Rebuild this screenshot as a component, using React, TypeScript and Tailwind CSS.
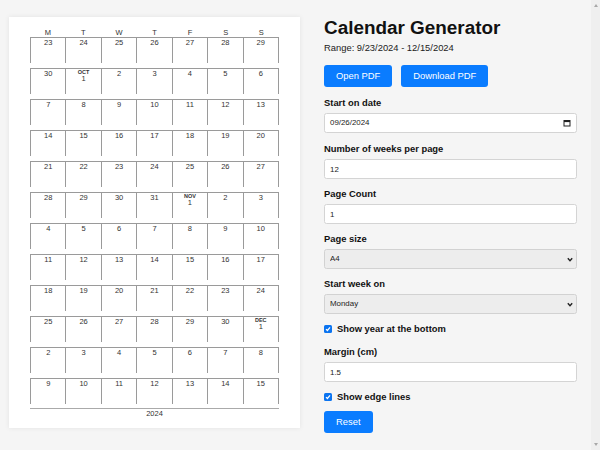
import React from "react";

const DAY_LETTERS = ["M", "T", "W", "T", "F", "S", "S"];
const MONTHS = ["JAN", "FEB", "MAR", "APR", "MAY", "JUN", "JUL", "AUG", "SEP", "OCT", "NOV", "DEC"];

type Day = { day: number; month: string | null };

const buildWeeks = (): Day[][] => {
  const start = new Date(2024, 8, 23);
  const weeks: Day[][] = [];
  for (let w = 0; w < 12; w++) {
    const row: Day[] = [];
    for (let d = 0; d < 7; d++) {
      const date = new Date(start.getFullYear(), start.getMonth(), start.getDate() + w * 7 + d);
      const first = date.getDate() === 1;
      row.push({ day: date.getDate(), month: first ? MONTHS[date.getMonth()] : null });
    }
    weeks.push(row);
  }
  return weeks;
};

const CalendarPreview = () => {
  const weeks = buildWeeks();
  return (
    <div className="bg-white shadow-[0_0_5px_rgba(0,0,0,0.08)] px-[21px] pt-[12px] pb-[10px] text-[#333]">
      {/* Day header */}
      <div className="grid grid-cols-7 text-center text-[7.5px] leading-[8px]">
        {DAY_LETTERS.map((l, i) => (
          <div key={i}>{l}</div>
        ))}
      </div>

      {/* Weeks */}
      {weeks.map((week, wi) => (
        <div key={wi} className="grid grid-cols-7 h-[26px] mb-[5px] border-t border-r border-[#9a9a9a]">
          {week.map((d, di) => (
            <div key={di} className="border-l border-[#9a9a9a] flex flex-col items-center">
              {d.month ? (
                <>
                  <span className="text-[5.5px] leading-[6px] font-bold">{d.month}</span>
                  <span className="text-[7.5px] leading-[8px]">{d.day}</span>
                </>
              ) : (
                <span className="text-[7.5px] leading-[8px] mt-[1px]">{d.day}</span>
              )}
            </div>
          ))}
        </div>
      ))}

      {/* Year */}
      <div className="-mt-[1px] border-t-[1.5px] border-[#aaa] text-center text-[7.5px] leading-[9px]">2024</div>
    </div>
  );
};

const Label = ({ children, className = "" }: { children: React.ReactNode; className?: string }) => (
  <div className={`font-bold text-[9.4px] leading-[12px] text-[#111] ${className}`}>{children}</div>
);

const TextField = ({ value }: { value: string }) => (
  <input
    readOnly
    value={value}
    className="block w-full h-[20px] px-[5px] bg-white border border-[#d4d4d4] rounded-[2.5px] text-[7.9px] text-[#222] outline-none"
  />
);

const SelectField = ({ value }: { value: string }) => (
  <div className="relative w-full h-[20px]">
    <select
      value={value}
      onChange={() => {}}
      className="appearance-none block w-full h-full px-[5px] bg-[#ededed] border border-[#d2d2d2] rounded-[2.5px] text-[7.9px] text-[#222] outline-none"
    >
      <option>{value}</option>
    </select>
    <svg className="pointer-events-none absolute right-[4px] top-[8px]" width="6" height="5" viewBox="0 0 6 5">
      <path d="M0.8 1.2 L3 3.6 L5.2 1.2" fill="none" stroke="#222" strokeWidth="1.4" />
    </svg>
  </div>
);

const CheckRow = ({ label, className = "" }: { label: string; className?: string }) => (
  <div className={`flex items-center gap-[5px] ${className}`}>
    <span className="w-[8px] h-[8px] rounded-[1.5px] bg-[#0b74f0] flex items-center justify-center">
      <svg width="6" height="6" viewBox="0 0 6 6">
        <path d="M1 3.1 L2.4 4.5 L5 1.4" fill="none" stroke="white" strokeWidth="1.2" />
      </svg>
    </span>
    <span className="font-bold text-[9.4px] leading-[12px] text-[#111]">{label}</span>
  </div>
);

const Button = ({ children }: { children: React.ReactNode }) => (
  <button className="block h-[22px] px-[12px] rounded-[3px] bg-[#0a7cff] text-white text-[9.4px] leading-[22px]">
    {children}
  </button>
);

const ScrollTrack = () => (
  <div className="w-[9px] shrink-0 h-full bg-[#efefef] flex flex-col items-center justify-between py-[4px]">
    <span className="w-0 h-0 border-l-[2.5px] border-r-[2.5px] border-b-[3px] border-l-transparent border-r-transparent border-b-[#a8a8a8]" />
    <span className="w-0 h-0 border-l-[2.5px] border-r-[2.5px] border-t-[3px] border-l-transparent border-r-transparent border-t-[#a8a8a8]" />
  </div>
);

export default function App() {
  return (
    <div className="flex w-[600px] h-[450px] overflow-hidden bg-[#f5f5f5] font-['Liberation_Sans',Arial,sans-serif]">
      {/* Preview */}
      <div className="w-[310px] shrink-0 pl-[9px] pr-[10px] pt-[17px]">
        <CalendarPreview />
      </div>

      {/* Settings */}
      <div className="flex-1 flex">
        <div className="flex-1 pl-[14px] pr-[14px] pt-[17px]">
          <h1 className="font-bold text-[18.9px] leading-[22px] text-[#111]">Calendar Generator</h1>
          <p className="mt-[3px] text-[9.4px] leading-[12px] text-[#222]">Range: 9/23/2024 - 12/15/2024</p>

          <div className="mt-[11px] flex gap-[9px]">
            <Button>Open PDF</Button>
            <Button>Download PDF</Button>
          </div>

          <Label className="mt-[10px] mb-[4px]">Start on date</Label>
          <div className="flex items-center justify-between w-full h-[20px] px-[5px] bg-white border border-[#d4d4d4] rounded-[2.5px] text-[7.9px] text-[#222]">
            <span>09/26/2024</span>
            <svg width="8" height="8" viewBox="0 0 8 8">
              <rect x="1" y="1.5" width="6" height="5.5" fill="none" stroke="#222" strokeWidth="1" />
              <rect x="1" y="1.5" width="6" height="1.6" fill="#222" />
            </svg>
          </div>

          <Label className="mt-[10px] mb-[4px]">Number of weeks per page</Label>
          <TextField value="12" />

          <Label className="mt-[9px] mb-[4px]">Page Count</Label>
          <TextField value="1" />

          <Label className="mt-[9px] mb-[4px]">Page size</Label>
          <SelectField value="A4" />

          <Label className="mt-[9px] mb-[4px]">Start week on</Label>
          <SelectField value="Monday" />

          <CheckRow label="Show year at the bottom" className="mt-[9px]" />

          <Label className="mt-[11px] mb-[4px]">Margin (cm)</Label>
          <TextField value="1.5" />

          <CheckRow label="Show edge lines" className="mt-[9px]" />

          <div className="mt-[8px] flex">
            <Button>Reset</Button>
          </div>
        </div>
        <ScrollTrack />
      </div>
    </div>
  );
}
